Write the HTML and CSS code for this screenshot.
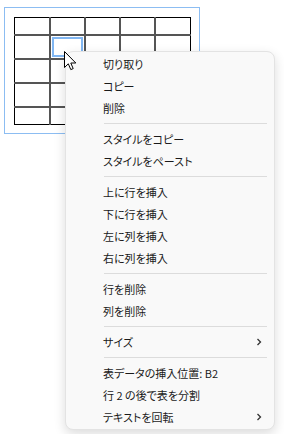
FILE: index.html
```html
<!DOCTYPE html>
<html lang="ja">
<head>
    <meta charset="UTF-8">
    <title>表のコンテキストメニュー</title>
    <link rel="stylesheet" href="styles.css">
</head>
<body>

<div class="canvas">
    <!-- Table object on the document -->
    <div class="frame">
        <table class="grid">
            <tr><td></td><td></td><td></td><td></td><td></td></tr>
            <tr><td></td><td class="sel"></td><td></td><td></td><td></td></tr>
            <tr><td></td><td></td><td></td><td></td><td></td></tr>
            <tr><td></td><td></td><td></td><td></td><td></td></tr>
            <tr><td></td><td></td><td></td><td></td><td></td></tr>
        </table>
    </div>

    <!-- Context menu -->
    <div class="menu">
        <div class="item">切り取り</div>
        <div class="item">コピー</div>
        <div class="item">削除</div>
        <div class="sep"></div>
        <div class="item">スタイルをコピー</div>
        <div class="item">スタイルをペースト</div>
        <div class="sep"></div>
        <div class="item">上に行を挿入</div>
        <div class="item">下に行を挿入</div>
        <div class="item">左に列を挿入</div>
        <div class="item">右に列を挿入</div>
        <div class="sep"></div>
        <div class="item">行を削除</div>
        <div class="item">列を削除</div>
        <div class="sep"></div>
        <div class="item">サイズ
            <svg class="chev" width="6" height="8" viewBox="0 0 6 8"><path d="M1.5 1 L4.5 4 L1.5 7" fill="none" stroke="#333" stroke-width="1.3"/></svg>
        </div>
        <div class="sep"></div>
        <div class="item">表データの挿入位置: B2</div>
        <div class="item">行 2 の後で表を分割</div>
        <div class="item">テキストを回転
            <svg class="chev" width="6" height="8" viewBox="0 0 6 8"><path d="M1.5 1 L4.5 4 L1.5 7" fill="none" stroke="#333" stroke-width="1.3"/></svg>
        </div>
    </div>

    <!-- Mouse pointer -->
    <svg class="cursor" width="13" height="20" viewBox="0 0 13 20">
        <path d="M0.5 0.5 L0.5 16.5 L4.3 12.8 L6.8 18.6 L9.2 17.6 L6.8 12 L11.8 12 Z" fill="#fff" stroke="#000" stroke-width="1" stroke-linejoin="round"/>
    </svg>
</div>

</body>
</html>
```

FILE: styles.css
```css
body {
    margin: 0;
    background-color: #fff;
    font-family: "Noto Sans CJK JP", "Noto Sans", sans-serif;
}

.canvas {
    position: relative;
    width: 284px;
    height: 434px;
    padding: 7px 0 0 4px;
    box-sizing: border-box;
}

.frame {
    width: 196px;
    height: 127px;
    box-sizing: border-box;
    border: 1px solid #8cbdf2;
    padding: 9px;
}

.grid {
    width: 177px;
    height: 108px;
    border-collapse: collapse;
    table-layout: fixed;
    border: 1px solid #000;
}

.grid td {
    border: 2px solid #555;
    padding: 0;
}

.grid tr:first-child td {
    border-top: 1px solid #000;
}

.grid tr:last-child td {
    border-bottom: 1px solid #000;
}

.grid td:first-child {
    border-left: 1px solid #000;
}

.grid td:last-child {
    border-right: 1px solid #000;
}

.grid td.sel {
    outline: 2px solid #80b6f2;
    outline-offset: -4px;
}

.menu {
    position: absolute;
    left: 65px;
    top: 51px;
    width: 210px;
    box-sizing: border-box;
    padding: 1px 0;
    background-color: #f9f9f9;
    border: 1px solid #e3e3e3;
    border-radius: 8px;
    box-shadow: 0 4px 12px rgba(0, 0, 0, 0.14);
}

.item {
    display: flex;
    align-items: center;
    justify-content: space-between;
    height: 22px;
    padding: 0 12px 0 37px;
    font-size: 11px;
    color: #1a1a1a;
    font-feature-settings: "palt";
    white-space: nowrap;
}

.chev {
    display: block;
}

.sep {
    height: 1px;
    margin: 4px 7px 4px 38px;
    background-color: #dcdcdc;
}

.cursor {
    position: absolute;
    left: 64px;
    top: 51px;
}
```
